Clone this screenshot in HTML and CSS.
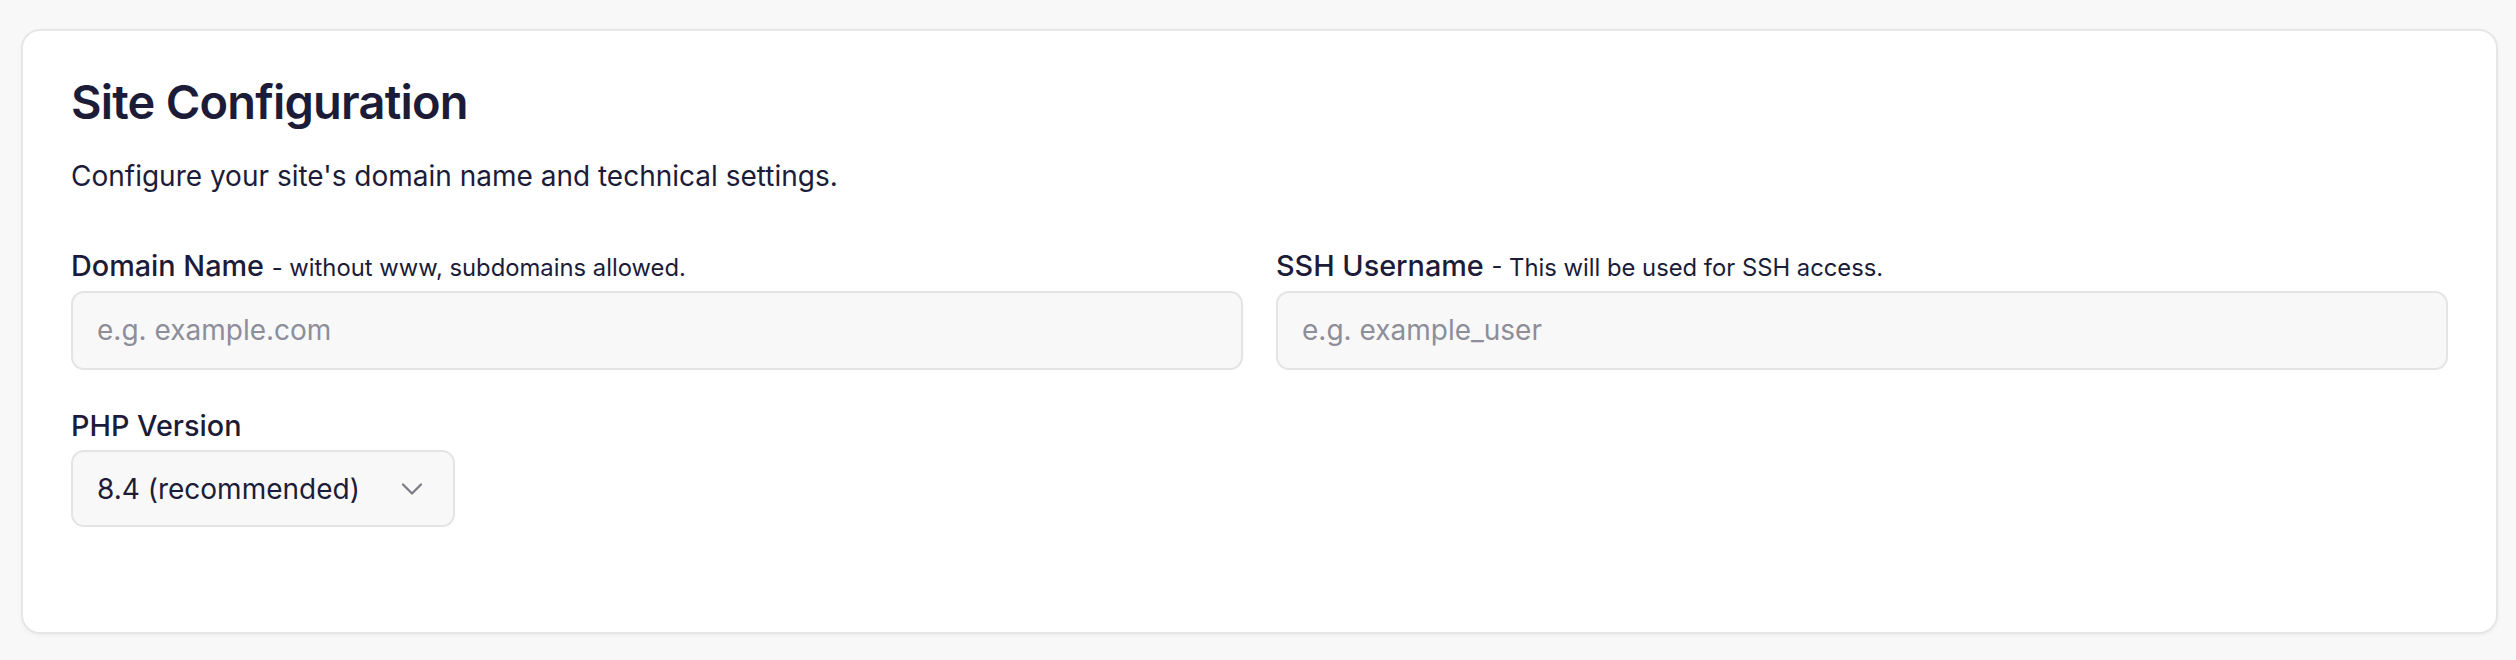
FILE: index.html
```html
<!DOCTYPE html>
<html lang="en">
<head>
    <meta charset="UTF-8">
    <title>Site Configuration</title>
    <link rel="stylesheet" href="styles.css">
</head>
<body>
    <div class="container">
        <main class="card">
            <h1>Site Configuration</h1>
            <p class="intro">Configure your site's domain name and technical settings.</p>

            <div class="field-grid">
                <div class="field">
                    <label for="domain">Domain Name <span class="hint">- without www, subdomains allowed.</span></label>
                    <input type="text" id="domain" class="text-input" placeholder="e.g. example.com">
                </div>
                <div class="field">
                    <label for="sshUser">SSH Username <span class="hint">- This will be used for SSH access.</span></label>
                    <input type="text" id="sshUser" class="text-input" placeholder="e.g. example_user">
                </div>
            </div>

            <div class="field">
                <label for="php">PHP Version</label>
                <div class="select-wrap">
                    <select id="php" class="select">
                        <option>8.4 (recommended)</option>
                        <option>8.3</option>
                        <option>8.2</option>
                    </select>
                    <svg class="chevron" xmlns="http://www.w3.org/2000/svg" width="20" height="20" viewBox="0 0 24 24" fill="none" stroke="currentColor" stroke-width="1.5" stroke-linecap="round" stroke-linejoin="round">
                        <polyline points="6 9 12 15 18 9"></polyline>
                    </svg>
                </div>
            </div>
        </main>
    </div>
</body>
</html>
```

FILE: styles.css
```css
:root {
    --background-color: #F8F8F8;
    --card-bg: #FFFFFF;
    --text-color: #1C1C38;
    --placeholder-color: #8E8E99;
    --border-color: #E4E4E7;
    --input-bg: #F8F8F9;
}

* {
    box-sizing: border-box;
}

body {
    margin: 0;
    font-family: 'Inter', system-ui, sans-serif;
    background: var(--background-color);
    color: var(--text-color);
}

.container {
    padding: 29px 18px 26px 21px;
}

.card {
    background: var(--card-bg);
    border: 2px solid #E6E6E6;
    border-radius: 19px;
    box-shadow: 0 2px 4px rgba(0, 0, 0, 0.04);
    padding: 43px 48px 0;
    height: 605px;
}

h1 {
    font-size: 47px;
    font-weight: 600;
    line-height: 1.2;
    margin: 0 0 25px;
    letter-spacing: -0.8px;
}

.intro {
    font-size: 28px;
    line-height: 1.5;
    margin: 0 0 49px;
}

.field-grid {
    display: grid;
    grid-template-columns: 1fr 1fr;
    gap: 33px;
    margin-bottom: 36px;
}

.field {
    display: flex;
    flex-direction: column;
    gap: 4px;
}

label {
    font-size: 28.8px;
    font-weight: 500;
    line-height: 1.4;
}

.hint {
    font-size: 23.8px;
    font-weight: 400;
}

.text-input,
.select {
    font-family: inherit;
    font-size: 28px;
    color: var(--text-color);
    background: var(--input-bg);
    border: 2px solid var(--border-color);
    border-radius: 13px;
    height: 79px;
    padding: 0 24px;
    outline: none;
}

.text-input::placeholder {
    color: var(--placeholder-color);
}

.select-wrap {
    position: relative;
    width: 384px;
}

.select {
    -webkit-appearance: none;
    appearance: none;
    width: 100%;
    height: 77px;
}

.chevron {
    position: absolute;
    right: 25px;
    top: 50%;
    transform: translateY(-50%);
    width: 36px;
    height: 36px;
    color: #7B7B85;
    pointer-events: none;
}
```
